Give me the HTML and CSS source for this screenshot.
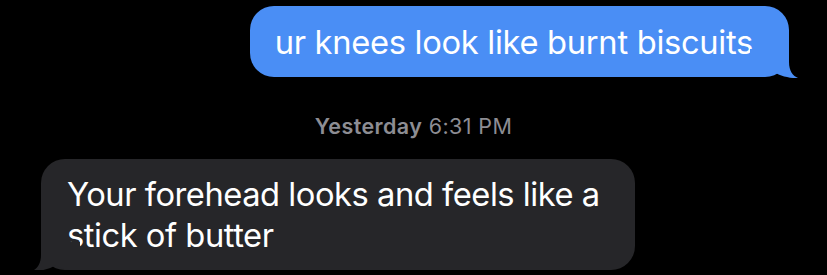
FILE: index.html
```html
<!DOCTYPE html>
<html>
<head>
<meta charset="utf-8">
<link rel="stylesheet" href="styles.css">
</head>
<body>
<div class="thread">
  <div class="row row-sent">
    <div class="bubble bubble-sent">
      <span class="text">ur knees look like burnt biscuits</span>
      <svg class="tail tail-sent" width="50" height="30" viewBox="0 0 50 30"><path d="M0 0 H39 V13 C39 22 43 27 48 29 C40 29.5 30 27 24 23 C20 26 15 28 10 28 H0 Z"/></svg>
    </div>
  </div>
  <div class="timestamp"><b>Yesterday</b> 6:31 PM</div>
  <div class="row row-received">
    <div class="bubble bubble-received">
      <span class="text">Your forehead looks and feels like a<br>stick of butter</span>
      <svg class="tail tail-received" width="50" height="30" viewBox="0 0 50 30"><path transform="translate(50 0) scale(-1 1)" d="M0 0 H39 V13 C39 22 43 27 48 29 C40 29.5 30 27 24 23 C20 26 15 28 10 28 H0 Z"/></svg>
    </div>
  </div>
</div>
</body>
</html>
```
FILE: styles.css
```css
html, body {
  margin: 0;
  padding: 0;
  background: #000;
}
body {
  font-family: Inter, "Liberation Sans", sans-serif;
  color: #fff;
}
.thread {
  display: flex;
  flex-direction: column;
  padding-top: 6px;
}
.row {
  display: flex;
}
.row-sent {
  justify-content: flex-end;
  padding-right: 38px;
}
.row-received {
  justify-content: flex-start;
  padding-left: 41px;
  margin-top: 22px;
}
.bubble {
  position: relative;
  border-radius: 24px;
  font-size: 32.7px;
  letter-spacing: -0.3px;
}
.bubble-sent {
  background: #4a8ef5;
  height: 71px;
  display: flex;
  align-items: center;
  padding: 0 36px 0 25px;
  box-sizing: border-box;
}
.bubble-received {
  background: #262629;
  padding: 15px 35px 14px 26px;
  line-height: 41px;
  letter-spacing: -0.47px;
}
.tail {
  position: absolute;
  bottom: -2px;
}
.tail-sent {
  right: -11px;
  fill: #4a8ef5;
}
.tail-received {
  left: -11px;
  fill: #262629;
}
.timestamp {
  margin-top: 38px;
  text-align: center;
  font-size: 21.5px;
  line-height: 22px;
  letter-spacing: 0.4px;
  color: #8d8d93;
}
.timestamp b {
  font-weight: 600;
}
```
